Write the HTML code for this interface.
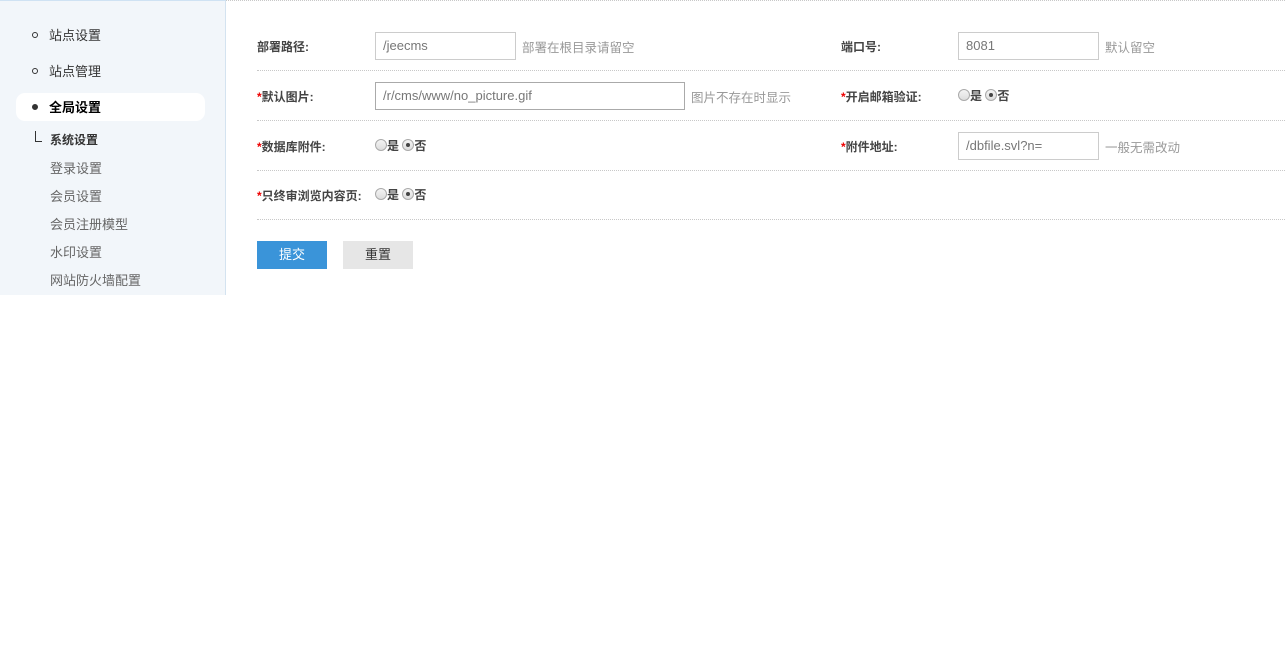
<!DOCTYPE html>
<html><head><meta charset="utf-8"><style>
*{margin:0;padding:0;box-sizing:border-box}
body{width:1285px;height:648px;background:#fff;font-family:"Liberation Sans","Noto Sans CJK SC",sans-serif;font-size:13px;color:#333;position:relative;overflow:hidden}
.a{position:absolute;white-space:nowrap}
#side{left:0;top:0;width:226px;height:295px;background:#f2f6fa;border-right:1px solid #d4e3f0;border-top:1px solid #cfe2f3}
.dot{width:6px;height:6px;border-radius:50%;border:1px solid #333}
.hl{left:16px;top:93px;width:189px;height:28px;background:#fff;border-radius:9px}
.sub{color:#666;font-size:13px}
.line{left:257px;width:1028px;height:0;border-top:1px dotted #c8c8c8}
.lbl{font-weight:bold;color:#444;font-size:12px}
.lbl b{color:#e00}
.inp{height:28px;border:1px solid #ccc;background:#fff;color:#777;padding-left:7px;line-height:26px}
.hint{color:#999;font-size:12.5px}
.r{width:12px;height:12px;border-radius:50%;border:1px solid #aaa;background:linear-gradient(#f4f4f4,#ddd);display:inline-block;vertical-align:-1px}
.r.on::after{content:"";display:block;width:4px;height:4px;border-radius:50%;background:#444;margin:3px}
.btn{top:241px;width:70px;height:28px;line-height:28px;text-align:center}
</style></head><body>
<div class="a" id="side"></div>
<div class="a line" style="top:0;left:226px;width:1059px"></div>
<div class="a dot" style="left:32px;top:32px"></div><div class="a" style="left:49px;top:25px">站点设置</div>
<div class="a dot" style="left:32px;top:68px"></div><div class="a" style="left:49px;top:61px">站点管理</div>
<div class="a hl"></div>
<div class="a dot" style="left:32px;top:104px;background:#333"></div><div class="a" style="left:49px;top:97px;font-weight:bold;color:#000">全局设置</div>
<div class="a" style="left:35px;top:131px;width:7px;height:11px;border-left:1px solid #333;border-bottom:1px solid #333"></div>
<div class="a" style="left:50px;top:131px;font-weight:bold;font-size:12px">系统设置</div>
<div class="a sub" style="left:50px;top:158px">登录设置</div>
<div class="a sub" style="left:50px;top:186px">会员设置</div>
<div class="a sub" style="left:50px;top:214px">会员注册模型</div>
<div class="a sub" style="left:50px;top:242px">水印设置</div>
<div class="a sub" style="left:50px;top:270px">网站防火墙配置</div>

<div class="a lbl" style="left:257px;top:38px">部署路径:</div>
<div class="a inp" style="left:375px;top:32px;width:141px">/jeecms</div>
<div class="a hint" style="left:522px;top:37px">部署在根目录请留空</div>
<div class="a lbl" style="left:841px;top:38px">端口号:</div>
<div class="a inp" style="left:958px;top:32px;width:141px">8081</div>
<div class="a hint" style="left:1105px;top:37px">默认留空</div>
<div class="a line" style="top:70px"></div>

<div class="a lbl" style="left:257px;top:88px"><b>*</b>默认图片:</div>
<div class="a inp" style="left:375px;top:82px;width:310px;border-color:#aaa">/r/cms/www/no_picture.gif</div>
<div class="a hint" style="left:691px;top:87px">图片不存在时显示</div>
<div class="a lbl" style="left:841px;top:88px"><b>*</b>开启邮箱验证:</div>
<div class="a lbl" style="left:958px;top:87px"><span class="r"></span>是 <span class="r on"></span>否</div>
<div class="a line" style="top:120px"></div>

<div class="a lbl" style="left:257px;top:138px"><b>*</b>数据库附件:</div>
<div class="a lbl" style="left:375px;top:137px"><span class="r"></span>是 <span class="r on"></span>否</div>
<div class="a lbl" style="left:841px;top:138px"><b>*</b>附件地址:</div>
<div class="a inp" style="left:958px;top:132px;width:141px">/dbfile.svl?n=</div>
<div class="a hint" style="left:1105px;top:137px">一般无需改动</div>
<div class="a line" style="top:170px"></div>

<div class="a lbl" style="left:257px;top:187px"><b>*</b>只终审浏览内容页:</div>
<div class="a lbl" style="left:375px;top:186px"><span class="r"></span>是 <span class="r on"></span>否</div>
<div class="a line" style="top:219px"></div>

<div class="a btn" style="left:257px;background:#3a94d9;color:#fff">提交</div>
<div class="a btn" style="left:343px;background:#e6e6e6;color:#333">重置</div>
</body></html>
